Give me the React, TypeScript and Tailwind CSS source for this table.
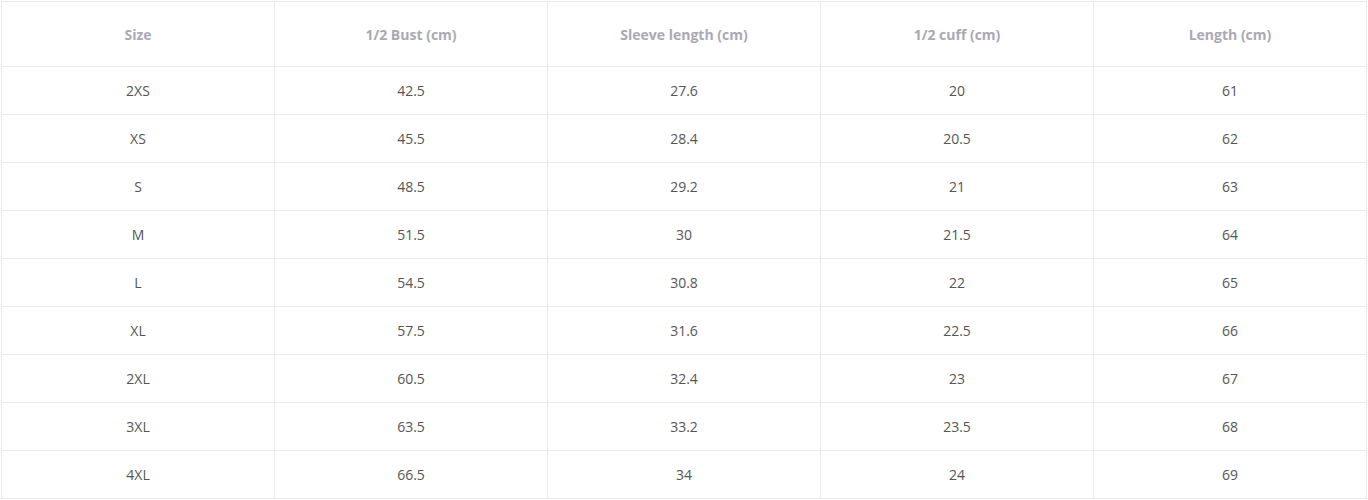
import React from "react";

const headers = ["Size", "1/2 Bust (cm)", "Sleeve length (cm)", "1/2 cuff (cm)", "Length (cm)"];
const rows = [
  ["2XS", "42.5", "27.6", "20", "61"],
  ["XS", "45.5", "28.4", "20.5", "62"],
  ["S", "48.5", "29.2", "21", "63"],
  ["M", "51.5", "30", "21.5", "64"],
  ["L", "54.5", "30.8", "22", "65"],
  ["XL", "57.5", "31.6", "22.5", "66"],
  ["2XL", "60.5", "32.4", "23", "67"],
  ["3XL", "63.5", "33.2", "23.5", "68"],
  ["4XL", "66.5", "34", "24", "69"],
];

export default function App() {
  return (
    <div className="bg-white w-[1368px] h-[500px] pt-[1px] pl-[1px]" style={{ fontFamily: '"Open Sans", "Noto Sans", sans-serif' }}>
      <div className="grid grid-cols-[273px_273px_273px_273px_273px] w-[1366px] border-l border-t border-[#e7eaec]">
        {headers.map((h) => (
          <div key={h} className="h-[65px] flex items-center justify-center border-r border-b border-[#e7eaec] text-[14px] font-bold text-[#a9a9b4]">
            {h}
          </div>
        ))}
        {rows.map((r, i) =>
          r.map((c, j) => (
            <div key={i + "-" + j} className="h-[48px] flex items-center justify-center border-r border-b border-[#e7eaec] text-[14px] text-[#555555]">
              {c}
            </div>
          ))
        )}
      </div>
    </div>
  );
}
